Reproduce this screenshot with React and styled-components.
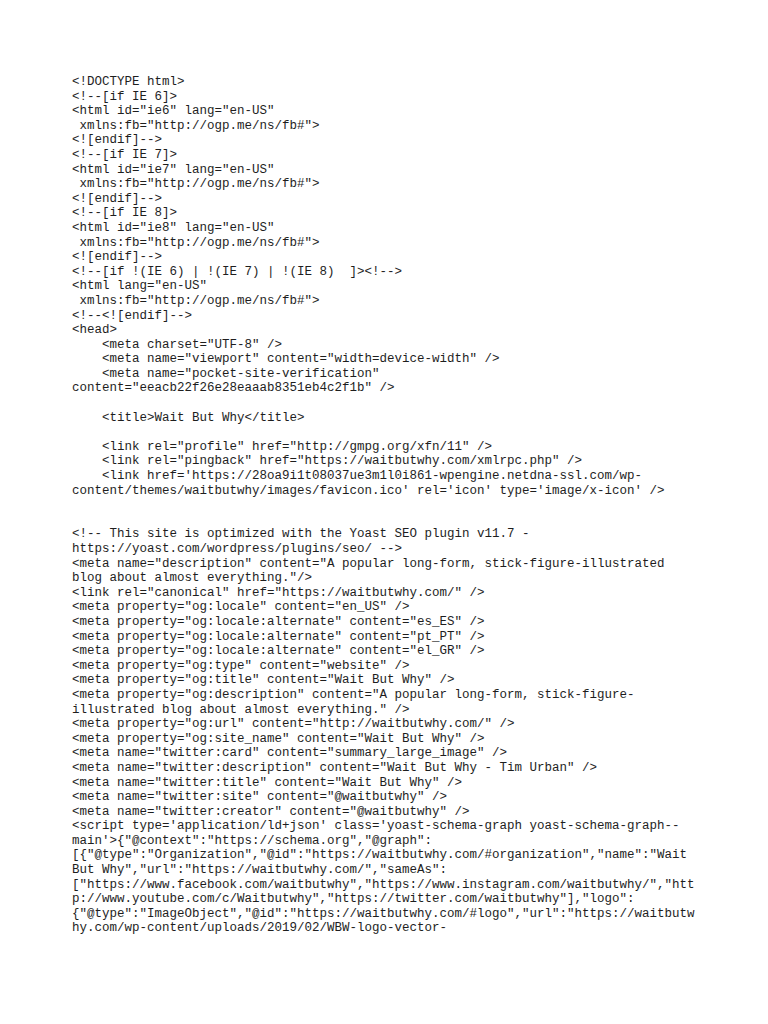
import React from "react";
import styled, { createGlobalStyle } from "styled-components";

const GlobalStyle = createGlobalStyle`
  html, body {
    margin: 0;
    padding: 0;
    background: #ffffff;
  }
`;

const Page = styled.div`
  width: 768px;
  min-height: 1024px;
  box-sizing: border-box;
  padding: 75px 0 0 72px;
  background: #ffffff;
`;

const Source = styled.pre`
  margin: 0;
  font-family: "Liberation Mono", "Courier New", monospace;
  font-size: 12.5px;
  line-height: 14.6px;
  color: #1e1e1e;
  white-space: pre;
`;

const lines = [
  `<!DOCTYPE html>`,
  `<!--[if IE 6]>`,
  `<html id="ie6" lang="en-US"`,
  ` xmlns:fb="http://ogp.me/ns/fb#">`,
  `<![endif]-->`,
  `<!--[if IE 7]>`,
  `<html id="ie7" lang="en-US"`,
  ` xmlns:fb="http://ogp.me/ns/fb#">`,
  `<![endif]-->`,
  `<!--[if IE 8]>`,
  `<html id="ie8" lang="en-US"`,
  ` xmlns:fb="http://ogp.me/ns/fb#">`,
  `<![endif]-->`,
  `<!--[if !(IE 6) | !(IE 7) | !(IE 8)  ]><!-->`,
  `<html lang="en-US"`,
  ` xmlns:fb="http://ogp.me/ns/fb#">`,
  `<!--<![endif]-->`,
  `<head>`,
  `    <meta charset="UTF-8" />`,
  `    <meta name="viewport" content="width=device-width" />`,
  `    <meta name="pocket-site-verification"`,
  `content="eeacb22f26e28eaaab8351eb4c2f1b" />`,
  ``,
  `    <title>Wait But Why</title>`,
  ``,
  `    <link rel="profile" href="http://gmpg.org/xfn/11" />`,
  `    <link rel="pingback" href="https://waitbutwhy.com/xmlrpc.php" />`,
  `    <link href='https://28oa9i1t08037ue3m1l0i861-wpengine.netdna-ssl.com/wp-`,
  `content/themes/waitbutwhy/images/favicon.ico' rel='icon' type='image/x-icon' />`,
  ``,
  ``,
  `<!-- This site is optimized with the Yoast SEO plugin v11.7 -`,
  `https://yoast.com/wordpress/plugins/seo/ -->`,
  `<meta name="description" content="A popular long-form, stick-figure-illustrated`,
  `blog about almost everything."/>`,
  `<link rel="canonical" href="https://waitbutwhy.com/" />`,
  `<meta property="og:locale" content="en_US" />`,
  `<meta property="og:locale:alternate" content="es_ES" />`,
  `<meta property="og:locale:alternate" content="pt_PT" />`,
  `<meta property="og:locale:alternate" content="el_GR" />`,
  `<meta property="og:type" content="website" />`,
  `<meta property="og:title" content="Wait But Why" />`,
  `<meta property="og:description" content="A popular long-form, stick-figure-`,
  `illustrated blog about almost everything." />`,
  `<meta property="og:url" content="http://waitbutwhy.com/" />`,
  `<meta property="og:site_name" content="Wait But Why" />`,
  `<meta name="twitter:card" content="summary_large_image" />`,
  `<meta name="twitter:description" content="Wait But Why - Tim Urban" />`,
  `<meta name="twitter:title" content="Wait But Why" />`,
  `<meta name="twitter:site" content="@waitbutwhy" />`,
  `<meta name="twitter:creator" content="@waitbutwhy" />`,
  `<script type='application/ld+json' class='yoast-schema-graph yoast-schema-graph--`,
  `main'>{"@context":"https://schema.org","@graph":`,
  `[{"@type":"Organization","@id":"https://waitbutwhy.com/#organization","name":"Wait`,
  `But Why","url":"https://waitbutwhy.com/","sameAs":`,
  `["https://www.facebook.com/waitbutwhy","https://www.instagram.com/waitbutwhy/","htt`,
  `p://www.youtube.com/c/Waitbutwhy","https://twitter.com/waitbutwhy"],"logo":`,
  `{"@type":"ImageObject","@id":"https://waitbutwhy.com/#logo","url":"https://waitbutw`,
  `hy.com/wp-content/uploads/2019/02/WBW-logo-vector-`,
];

const App = () => {
  return (
    <>
      <GlobalStyle />
      <Page>
        <Source>{lines.join("\n")}</Source>
      </Page>
    </>
  );
};

export default App;
